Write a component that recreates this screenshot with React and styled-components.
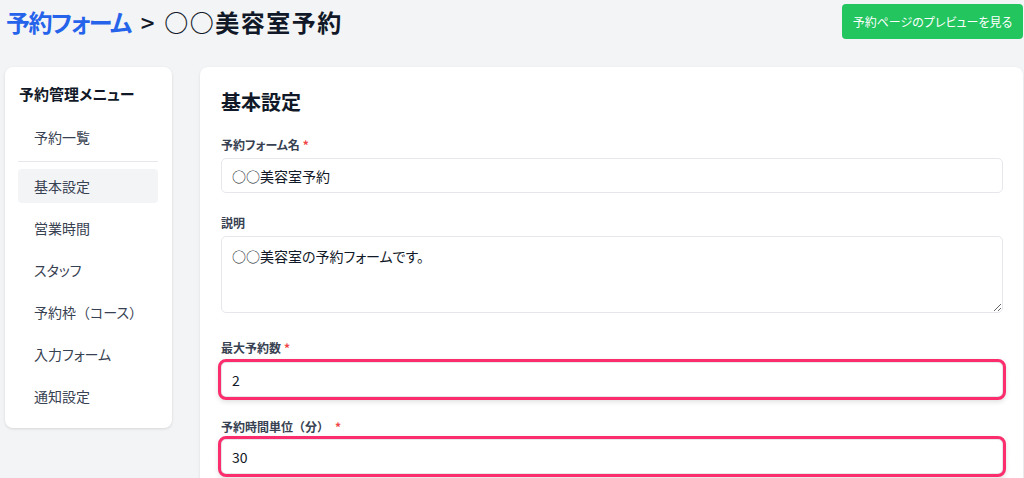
import styled, { createGlobalStyle } from "styled-components";

const GlobalStyle = createGlobalStyle`
  body {
    margin: 0;
    background: #f3f4f6;
    font-family: "Noto Sans CJK JP", "Noto Sans", sans-serif;
    font-feature-settings: "palt";
    color: #111827;
  }
  * { box-sizing: border-box; }
`

const Page = styled.div`
  width: 1024px;
  height: 478px;
  overflow: hidden;
  padding: 4px 1px 0 6px;
`

const Header = styled.div`
  display: flex;
  justify-content: space-between;
  align-items: flex-start;
  height: 63px;
`

const Title = styled.h1`
  margin: 1px 0 0;
  font-size: 24px;
  font-weight: 700;
  line-height: 34px;
  color: #111827;
`

const TitleLink = styled.span`
  color: #2563eb;
  letter-spacing: -1.5px;
`

const Sep = styled.span`
  margin: 0 10px 0 10px;
  font-weight: 500;
`

const TitleName = styled.span`
  letter-spacing: 1.5px;
`

// full-width glyphs (○, brackets) keep their normal width
const Wide = styled.span`
  font-feature-settings: normal;
`

const PreviewButton = styled.button`
  width: 181px;
  height: 35px;
  padding: 0;
  border: none;
  border-radius: 4px;
  background: #22c55e;
  color: #fff;
  font-family: inherit;
  font-feature-settings: "palt";
  font-size: 12px;
  font-weight: 400;
  white-space: nowrap;
  cursor: pointer;
`

const Body = styled.div`
  display: flex;
  align-items: flex-start;
  gap: 28px;
  margin-left: -1px;
`

const Sidebar = styled.nav`
  width: 167px;
  flex-shrink: 0;
  background: #fff;
  border-radius: 8px;
  box-shadow: 0 1px 3px rgba(0, 0, 0, 0.12);
  padding: 16px 14px 15px 13px;
`

const SideTitle = styled.h2`
  margin: 0 0 15px 1px;
  font-size: 15px;
  font-weight: 700;
  line-height: 22px;
`

const MenuList = styled.div`
  display: flex;
  flex-direction: column;
  gap: 8px;
`

const MenuItem = styled.div`
  height: 34px;
  display: flex;
  align-items: center;
  padding-left: 16px;
  border-radius: 4px;
  font-size: 14px;
  color: #374151;
  background: ${(p) => (p.$active ? "#f3f4f6" : "transparent")};
`

const Divider = styled.hr`
  border: none;
  border-top: 1px solid #e5e7eb;
  margin: -1px 0 -1px;
`

const Main = styled.main`
  flex: 1;
  background: #fff;
  border-radius: 8px 8px 0 0;
  box-shadow: 0 1px 3px rgba(0, 0, 0, 0.1);
  padding: 21px 20px 40px 21px;
  min-height: 420px;
`

const Heading = styled.h2`
  margin: 0 0 20px;
  font-size: 20px;
  font-weight: 700;
  line-height: 28px;
`

const Field = styled.div`
  margin-bottom: ${(p) => p.$gap || 21}px;
`

const Label = styled.label`
  display: block;
  font-size: 12px;
  font-weight: 600;
  line-height: 18px;
  color: #374151;
  margin-bottom: ${(p) => p.$gap || 4}px;
`

const Required = styled.span`
  color: #ef4444;
  margin-left: ${(p) => (p.$wide ? 6 : 3)}px;
`

const Input = styled.input`
  display: block;
  width: 100%;
  height: 35px;
  padding: 0 10px;
  border: 1px solid #e5e7eb;
  border-radius: 5px;
  font-family: inherit;
  font-feature-settings: normal;
  font-size: 14px;
  color: #111827;
  outline: ${(p) => (p.$highlight ? "3px solid #fb2d6c" : "none")};
  outline-offset: 0;
  box-shadow: ${(p) => (p.$highlight ? "0 2px 5px 3px rgba(0,0,0,0.12)" : "none")};
`

const TextArea = styled.textarea`
  display: block;
  width: 100%;
  height: 77px;
  padding: 9px 10px;
  border: 1px solid #e5e7eb;
  border-radius: 5px;
  font-family: inherit;
  font-feature-settings: "palt";
  font-size: 14px;
  line-height: 20px;
  color: #111827;
  outline: none;
`

export default function App() {
  return (
    <Page>
      <GlobalStyle />
      <Header>
        <Title>
          <TitleLink>予約フォーム</TitleLink>
          <Sep>&gt;</Sep>
          <TitleName><Wide>○○</Wide>美容室予約</TitleName>
        </Title>
        <PreviewButton>予約ページのプレビューを見る</PreviewButton>
      </Header>
      <Body>
        <Sidebar>
          <SideTitle>予約管理メニュー</SideTitle>
          <MenuList>
            <MenuItem>予約一覧</MenuItem>
            <Divider />
            <MenuItem $active>基本設定</MenuItem>
            <MenuItem>営業時間</MenuItem>
            <MenuItem>スタッフ</MenuItem>
            <MenuItem>予約枠<Wide>（</Wide>コース<Wide>）</Wide></MenuItem>
            <MenuItem>入力フォーム</MenuItem>
            <MenuItem>通知設定</MenuItem>
          </MenuList>
        </Sidebar>
        <Main>
          <Heading>基本設定</Heading>
          <Field>
            <Label>予約フォーム名<Required>*</Required></Label>
            <Input defaultValue="○○美容室予約" />
          </Field>
          <Field $gap={26}>
            <Label>説明</Label>
            <TextArea defaultValue="○○美容室の予約フォームです。" />
          </Field>
          <Field>
            <Label $gap={5}>最大予約数<Required>*</Required></Label>
            <Input $highlight defaultValue="2" />
          </Field>
          <Field>
            <Label $gap={3}>予約時間単位<Wide>（分）</Wide><Required $wide>*</Required></Label>
            <Input $highlight defaultValue="30" />
          </Field>
        </Main>
      </Body>
    </Page>
  );
}
